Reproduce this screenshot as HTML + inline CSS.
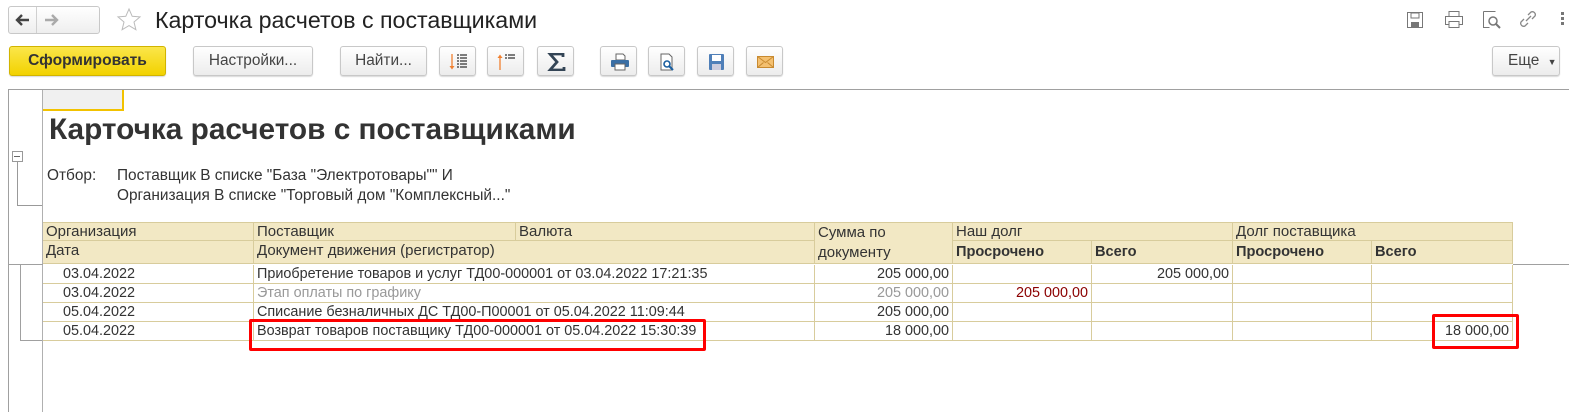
<!DOCTYPE html>
<html><head><meta charset="utf-8"><style>
body{margin:0;width:1569px;height:412px;background:#fff;font-family:"Liberation Sans",Arial,sans-serif;position:relative;overflow:hidden;color:#333}
.a{position:absolute}
.btn{position:absolute;top:46px;height:30px;border:1px solid #c8c8c8;border-radius:3px;background:linear-gradient(#fff,#ececec);box-sizing:border-box;font-size:15.4px;color:#444;text-align:center;line-height:28px;box-shadow:0 1px 1px rgba(0,0,0,.15)}
.ib svg{position:absolute;left:9px;top:6px}
.c{position:absolute;font-size:14.4px;line-height:19px;white-space:nowrap;box-sizing:border-box;padding:0 3px}
.h{background:#f2e8c4;border-right:1px solid #d8cc9c;border-bottom:1px solid #d8cc9c;font-size:15px}
.d{border-right:1px solid #d8cc9c;border-bottom:1px solid #d8cc9c;height:19px}
.r{text-align:right}
.b{font-weight:bold;font-size:14.6px}
.l{position:absolute;background:#a0a0a0}
</style></head><body>
<div class="a" style="left:8px;top:6px;width:92px;height:28px;border:1px solid #c8c8c8;border-radius:3px;background:linear-gradient(#fff,#eee);box-sizing:border-box"></div>
<div class="l" style="left:36px;top:7px;width:1px;height:26px;background:#d0d0d0"></div>
<svg class="a" style="left:14px;top:13px" width="16" height="14"><path d="M15 7H4M8 2L3 7l5 5" stroke="#444" stroke-width="2.4" fill="none"/></svg>
<svg class="a" style="left:44px;top:13px" width="16" height="14"><path d="M1 7h11M8 2l5 5-5 5" stroke="#aaa" stroke-width="2.4" fill="none"/></svg>
<svg class="a" style="left:116px;top:7px" width="26" height="26"><path d="M13 2l3.2 7.3 7.8.6-6 5.1 1.9 7.7L13 18.6 6.1 22.7 8 15 2 9.9l7.8-.6z" fill="none" stroke="#bbb" stroke-width="1"/></svg>
<div class="a" style="left:155px;top:5px;font-size:23.2px;color:#222;line-height:30px">Карточка расчетов с поставщиками</div>
<svg class="a" style="left:1406px;top:11px" width="18" height="18"><rect x="1.5" y="1.5" width="15" height="15" fill="none" stroke="#777"/><rect x="5" y="2" width="8" height="5" fill="none" stroke="#777"/><rect x="5" y="11" width="8" height="5" fill="#777"/></svg>
<svg class="a" style="left:1444px;top:10px" width="20" height="19"><rect x="5" y="1.5" width="10" height="5" fill="none" stroke="#777"/><rect x="1.5" y="6.5" width="17" height="8" fill="none" stroke="#777"/><rect x="5" y="11.5" width="10" height="6" fill="#fff" stroke="#777"/></svg>
<svg class="a" style="left:1482px;top:10px" width="20" height="19"><path d="M1.5 1.5h12M1.5 1.5v16h6" fill="none" stroke="#777"/><circle cx="11" cy="11" r="4" fill="none" stroke="#777" stroke-width="1.5"/><path d="M14 14l4 4" stroke="#777" stroke-width="2"/></svg>
<svg class="a" style="left:1518px;top:9px" width="20" height="20"><path d="M8 12l5-5M6 10l-3 3a3 3 0 004 4l3-3M14 10l3-3a3 3 0 00-4-4l-3 3" fill="none" stroke="#888" stroke-width="1.3"/></svg>
<div class="a" style="left:1561px;top:12px;width:3px;height:3px;background:#777;box-shadow:0 5px #777,0 10px #777"></div>
<div class="btn" style="left:9px;width:157px;background:linear-gradient(#fbe64a,#f2d200);border-color:#d1b400;color:#333;font-weight:bold;font-size:15.6px">Сформировать</div>
<div class="btn" style="left:193px;width:120px">Настройки...</div>
<div class="btn" style="left:340px;width:87px">Найти...</div>
<div class="btn ib" style="left:439px;width:37px"><svg width="20" height="18"><path d="M3 1v14" stroke="#f08030" stroke-width="1.3"/><path d="M0.5 13l2.5 3.5 2.5-3.5" fill="#f08030"/><path d="M8 2h2M11 2h7M8 5h2M11 5h7M8 8h2M11 8h7M8 11h2M11 11h7M8 14h2M11 14h7" stroke="#333" stroke-width="1.3"/></svg></div>
<div class="btn ib" style="left:487px;width:37px"><svg width="20" height="18"><path d="M3 3v14" stroke="#f08030" stroke-width="1.3"/><path d="M0.5 5l2.5-3.5 2.5 3.5" fill="#f08030"/><path d="M8 2h2M11 2h7M8 5h2M11 5h7" stroke="#333" stroke-width="1.3"/></svg></div>
<div class="btn ib" style="left:537px;width:37px"><svg width="20" height="18"><path d="M2 1h14v3M16 1H3l7 8-7 8h14v-3" fill="none" stroke="#334455" stroke-width="2.8"/></svg></div>
<div class="btn ib" style="left:600px;width:37px"><svg width="20" height="18"><path d="M6 1h7l2 2v4H6z" fill="#fff" stroke="#666"/><rect x="1" y="7" width="18" height="7" rx="1" fill="#3a6fa5"/><rect x="5" y="11" width="10" height="6" fill="#fff" stroke="#666"/></svg></div>
<div class="btn ib" style="left:648px;width:37px"><svg width="20" height="18"><path d="M3 1h8l3 3v13H3z" fill="#fff" stroke="#666"/><circle cx="9" cy="11" r="3" fill="none" stroke="#1a5fa0" stroke-width="1.6"/><path d="M11 13l4 4" stroke="#1a5fa0" stroke-width="2"/></svg></div>
<div class="btn ib" style="left:697px;width:37px"><svg width="20" height="18"><rect x="2" y="1" width="15" height="16" rx="1" fill="#4f7fb8"/><rect x="5" y="2" width="9" height="6" fill="#fff"/><rect x="5" y="11" width="9" height="6" fill="#ccd"/></svg></div>
<div class="btn ib" style="left:746px;width:37px"><svg width="20" height="18"><rect x="1.5" y="3.5" width="16" height="11" fill="#f4c070" stroke="#c88a30"/><path d="M1.5 3.5l8 6 8-6M1.5 14.5l6-5M17.5 14.5l-6-5" fill="none" stroke="#c88a30"/></svg></div>
<div class="btn" style="left:1492px;width:68px;text-align:left;padding-left:15px">Еще <span style="font-size:9px;margin-left:4px">▼</span></div>
<div class="l" style="left:8px;top:89px;width:1561px;height:1px"></div>
<div class="l" style="left:8px;top:89px;width:1px;height:323px"></div>
<div class="l" style="left:42px;top:90px;width:1px;height:322px;background:#b0b0b0"></div>
<div class="a" style="left:43px;top:90px;width:79px;height:19px;background:#f0f0f0;border-right:2px solid #f2c200;border-bottom:2px solid #f2c200"></div>
<div class="a" style="left:49px;top:112px;font-size:29.8px;font-weight:bold;color:#333;line-height:36px">Карточка расчетов с поставщиками</div>
<div class="a" style="left:12px;top:151px;width:9px;height:9px;border:1px solid #999;background:#fff"></div>
<div class="l" style="left:14px;top:156px;width:6px;height:1px;background:#666"></div>
<div class="l" style="left:17px;top:162px;width:1px;height:43px;background:#999"></div>
<div class="l" style="left:17px;top:205px;width:25px;height:1px;background:#999"></div>
<div class="c" style="left:44px;top:166px;font-size:15.4px">Отбор:</div>
<div class="c" style="left:114px;top:166px;font-size:15.4px">Поставщик В списке "База "Электротовары"" И</div>
<div class="c" style="left:114px;top:186px;font-size:15.4px">Организация В списке "Торговый дом "Комплексный..."</div>
<div class="c h" style="left:43px;top:222px;width:211px;height:19px;border-top:1px solid #d8cc9c;line-height:18px">Организация</div>
<div class="c h" style="left:254px;top:222px;width:262px;height:19px;border-top:1px solid #d8cc9c;line-height:18px">Поставщик</div>
<div class="c h" style="left:516px;top:222px;width:299px;height:19px;border-top:1px solid #d8cc9c;line-height:18px">Валюта</div>
<div class="c h" style="left:43px;top:241px;width:211px;height:23px;line-height:20px">Дата</div>
<div class="c h" style="left:254px;top:241px;width:561px;height:23px;line-height:20px">Документ движения (регистратор)</div>
<div class="c h" style="left:815px;top:222px;width:138px;height:42px;border-top:1px solid #d8cc9c;line-height:20px">Сумма по<br>документу</div>
<div class="c h" style="left:953px;top:222px;width:280px;height:19px;border-top:1px solid #d8cc9c;line-height:18px">Наш долг</div>
<div class="c h" style="left:1233px;top:222px;width:280px;height:19px;border-top:1px solid #d8cc9c;line-height:18px">Долг поставщика</div>
<div class="c h b" style="left:953px;top:241px;width:139px;height:23px;line-height:23px">Просрочено</div>
<div class="c h b" style="left:1092px;top:241px;width:141px;height:23px;line-height:23px">Всего</div>
<div class="c h b" style="left:1233px;top:241px;width:139px;height:23px;line-height:23px">Просрочено</div>
<div class="c h b" style="left:1372px;top:241px;width:141px;height:23px;line-height:23px">Всего</div>
<div class="l" style="left:8px;top:264px;width:35px;height:1px"></div>
<div class="l" style="left:1513px;top:264px;width:56px;height:1px"></div>
<div class="l" style="left:20px;top:265px;width:1px;height:75px"></div>
<div class="l" style="left:20px;top:340px;width:22px;height:1px"></div>

<div class="c d" style="left:43px;top:265px;width:211px;padding-left:20px">03.04.2022</div>
<div class="c d" style="left:254px;top:265px;width:561px">Приобретение товаров и услуг ТД00-000001 от 03.04.2022 17:21:35</div>
<div class="c d r" style="left:815px;top:265px;width:138px">205 000,00</div>
<div class="c d" style="left:953px;top:265px;width:139px"></div>
<div class="c d r" style="left:1092px;top:265px;width:141px">205 000,00</div>
<div class="c d" style="left:1233px;top:265px;width:139px"></div>
<div class="c d" style="left:1372px;top:265px;width:141px"></div>

<div class="c d" style="left:43px;top:284px;width:211px;padding-left:20px">03.04.2022</div>
<div class="c d" style="left:254px;top:284px;width:561px;color:#999">Этап оплаты по графику</div>
<div class="c d r" style="left:815px;top:284px;width:138px;color:#999">205 000,00</div>
<div class="c d r" style="left:953px;top:284px;width:139px;color:#8b0000">205 000,00</div>
<div class="c d" style="left:1092px;top:284px;width:141px"></div>
<div class="c d" style="left:1233px;top:284px;width:139px"></div>
<div class="c d" style="left:1372px;top:284px;width:141px"></div>

<div class="c d" style="left:43px;top:303px;width:211px;padding-left:20px">05.04.2022</div>
<div class="c d" style="left:254px;top:303px;width:561px">Списание безналичных ДС ТД00-П00001 от 05.04.2022 11:09:44</div>
<div class="c d r" style="left:815px;top:303px;width:138px">205 000,00</div>
<div class="c d" style="left:953px;top:303px;width:139px"></div>
<div class="c d" style="left:1092px;top:303px;width:141px"></div>
<div class="c d" style="left:1233px;top:303px;width:139px"></div>
<div class="c d" style="left:1372px;top:303px;width:141px"></div>

<div class="c d" style="left:43px;top:322px;width:211px;padding-left:20px">05.04.2022</div>
<div class="c d" style="left:254px;top:322px;width:561px">Возврат товаров поставщику ТД00-000001 от 05.04.2022 15:30:39</div>
<div class="c d r" style="left:815px;top:322px;width:138px">18 000,00</div>
<div class="c d" style="left:953px;top:322px;width:139px"></div>
<div class="c d" style="left:1092px;top:322px;width:141px"></div>
<div class="c d" style="left:1233px;top:322px;width:139px"></div>
<div class="c d r" style="left:1372px;top:322px;width:141px">18 000,00</div>
<div class="a" style="left:249px;top:319px;width:457px;height:32px;border:3px solid #f00;box-sizing:border-box;border-radius:2px"></div>
<div class="a" style="left:1432px;top:314px;width:87px;height:35px;border:3px solid #f00;box-sizing:border-box;border-radius:2px"></div>
</body></html>
